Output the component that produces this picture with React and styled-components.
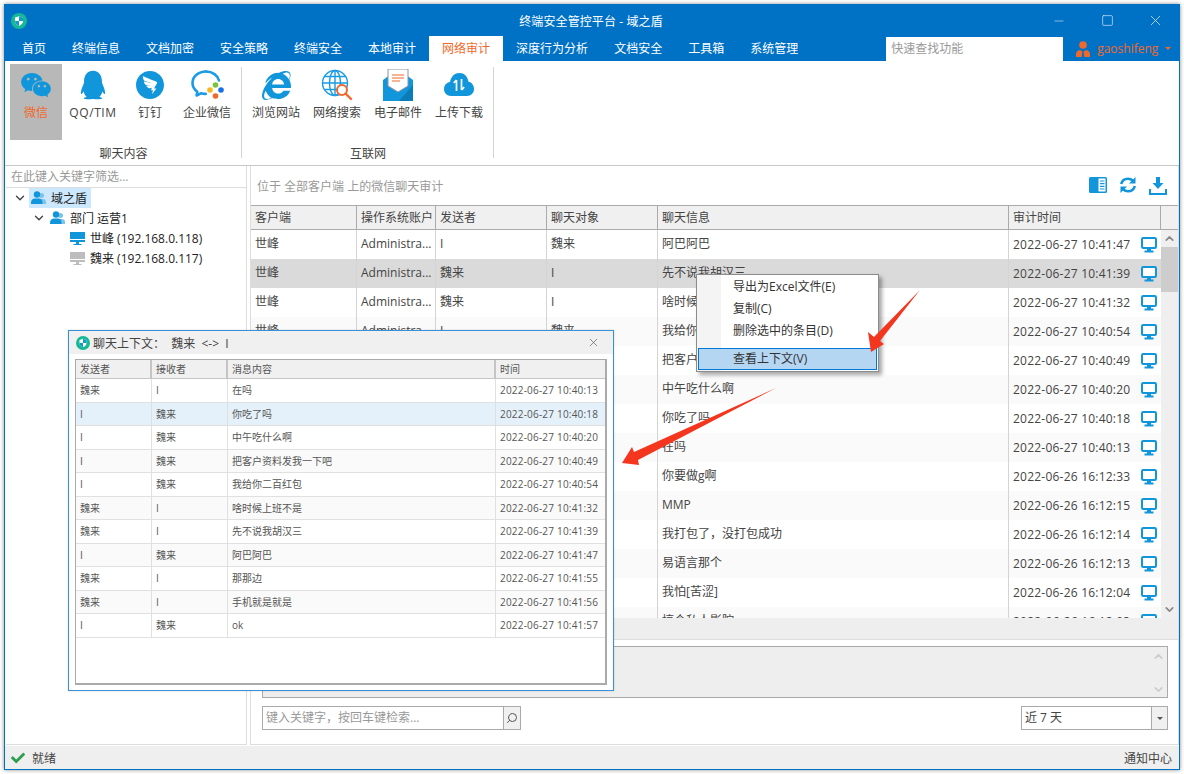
import React from 'react';
import styled, { createGlobalStyle } from 'styled-components';
import { AiFillWechat, AiFillDingtalkCircle } from 'react-icons/ai';
import { RiQqFill } from 'react-icons/ri';
import { FaInternetExplorer, FaCheck } from 'react-icons/fa';
import { FiSearch, FiX, FiMinus, FiSquare, FiChevronDown, FiChevronUp } from 'react-icons/fi';

const BLUE = '#0072c6';
const ICON = '#1296db';
const ORANGE = '#f2682a';

const Global = createGlobalStyle`
    html, body { margin: 0; padding: 0; background: #fff; }
    body {
        width: 1184px;
        height: 774px;
        overflow: hidden;
        font-family: "Open Sans", "Noto Sans CJK SC", sans-serif;
        font-size: 12px;
        color: #444;
    }
    * { box-sizing: border-box; }
`;

const Window = styled.div`
    position: relative;
    margin: 4px 0 0 4px;
    width: 1176px;
    height: 766px;
    display: flex;
    flex-direction: column;
    background: #fff;
    border: 1px solid ${BLUE};
    box-shadow: 0 0 4px rgba(0, 0, 0, 0.45);
`;

const TitleBar = styled.div`
    height: 31px;
    flex: none;
    background: ${BLUE};
    color: #fff;
    display: flex;
    align-items: center;
`;

const AppLogo = styled.div`
    width: 16px;
    height: 16px;
    margin-left: 6px;
    flex: none;
    display: flex;
`;

const TitleText = styled.div`
    flex: 1;
    text-align: center;
    font-size: 12px;
    margin-left: -22px;
    margin-right: -142px;
    letter-spacing: 0.1px;
`;

const WinButtons = styled.div`
    display: flex;
    color: #e6eef6;
`;

const WinButton = styled.div`
    width: 48px;
    height: 31px;
    display: flex;
    align-items: center;
    justify-content: center;
`;

const TabBar = styled.div`
    height: 25px;
    flex: none;
    background: ${BLUE};
    display: flex;
    padding-left: 4px;
`;

const Tab = styled.div`
    flex: none;
    padding: 0 13px;
    height: 25px;
    line-height: 25px;
    white-space: nowrap;
    color: ${p => (p.$active ? ORANGE : '#fff')};
    background: ${p => (p.$active ? '#fff' : 'transparent')};
`;

const QuickSearch = styled.div`
    flex: none;
    margin-left: 75px;
    width: 177px;
    height: 24px;
    margin-top: 1px;
    background: #fff;
    color: #999;
    padding-left: 5px;
    line-height: 24px;
`;

const UserBox = styled.div`
    flex: none;
    margin-left: 13px;
    display: flex;
    align-items: center;
    gap: 7px;
    color: ${ORANGE};
    height: 25px;
`;

const Caret = styled.span`
    width: 0;
    height: 0;
    border-left: 3px solid transparent;
    border-right: 3px solid transparent;
    border-top: 3px solid ${p => p.$color || ORANGE};
`;

const Ribbon = styled.div`
    height: 104px;
    flex: none;
    display: flex;
    background: #fff;
`;

const RibbonGroup = styled.div`
    position: relative;
    width: ${p => p.$width}px;
    padding: 3px 0 0 ${p => p.$pad}px;
    height: 99px;
    display: flex;
    gap: 5px;
    flex-wrap: wrap;
    align-content: flex-start;
    &::after {
        content: '';
        position: absolute;
        right: 0;
        top: 6px;
        bottom: 2px;
        width: 1px;
        background: #d4d4d4;
    }
`;

const RibbonButton = styled.div`
    width: ${p => p.$width}px;
    height: 76px;
    flex: none;
    display: flex;
    flex-direction: column;
    align-items: center;
    background: ${p => (p.$active ? '#b8b8b8' : 'transparent')};
    color: ${p => (p.$active ? ORANGE : '#444')};
    white-space: nowrap;
`;

const RibbonIcon = styled.div`
    height: 38px;
    padding-top: 4px;
    display: flex;
    align-items: center;
    justify-content: center;
    color: ${ICON};
`;

const RibbonLabel = styled.div`
    line-height: 16px;
    margin-top: 3px;
`;

const LatinLabel = styled(RibbonLabel)`
    letter-spacing: 0.6px;
`;

const GroupLabel = styled.div`
    width: calc(100% + ${p => p.$pad}px);
    margin-left: ${p => -p.$pad}px;
    text-align: center;
    line-height: 16px;
    margin-top: 1px;
`;

const Body = styled.div`
    flex: 1;
    min-height: 0;
    display: flex;
    border-top: 1px solid #c8c8c8;
    padding-left: 1px;
    padding-bottom: 1px;
`;

const LeftPane = styled.div`
    width: 241px;
    flex: none;
    border-right: 1px solid #ddd;
    border-bottom: 1px solid #ddd;
`;

const FilterBox = styled.div`
    height: 22px;
    line-height: 21px;
    padding-left: 5px;
    color: #999;
    border-bottom: 1px solid #ddd;
`;

const Tree = styled.div`
    display: flex;
    flex-direction: column;
`;

const TreeRow = styled.div`
    height: 20px;
    display: flex;
    align-items: center;
    padding-left: ${p => p.$indent}px;
    color: #222;
    white-space: nowrap;
`;

const TreeArrow = styled.span`
    width: 16px;
    display: flex;
    color: #444;
`;

const TreeLabel = styled.div`
    display: flex;
    align-items: center;
    height: 20px;
    gap: 5px;
    padding: 0 4px 0 2px;
    background: ${p => (p.$selected ? '#cce8ff' : 'transparent')};
`;

const RightPane = styled.div`
    width: 929px;
    margin-left: 3px;
    flex: none;
    display: flex;
    flex-direction: column;
    border-left: 1px solid #ddd;
    border-right: 1px solid #ddd;
    border-bottom: 1px solid #ddd;
`;

const Toolbar = styled.div`
    height: 39px;
    flex: none;
    display: flex;
    align-items: center;
    justify-content: space-between;
    padding: 0 11px 0 6px;
    color: #999;
`;

const ToolIcons = styled.div`
    display: flex;
    gap: 12px;
    color: ${ICON};
`;

const TableWrap = styled.div`
    height: 413px;
    flex: none;
    overflow: hidden;
    border-top: 1px solid #aaa;
`;

const HeadRow = styled.div`
    display: grid;
    grid-template-columns: 106px 79px 111px 111px 351px 152px 1fr;
    height: 24px;
    background: #f0f0f0;
    border-bottom: 1px solid #aaa;
`;

const HeadCell = styled.div`
    padding-left: 4px;
    line-height: 23px;
    border-right: 1px solid #aaa;
    color: #444;
    &:last-child { border-right: 0; }
`;

const TableBody = styled.div`
    display: flex;
`;

const Rows = styled.div`
    width: 910px;
    flex: none;
`;

const Row = styled.div`
    display: grid;
    grid-template-columns: 106px 79px 111px 111px 351px 152px;
    height: 29px;
    background: ${p => (p.$selected ? '#dadada' : p.$odd ? '#fafafa' : '#fff')};
`;

const Cell = styled.div`
    padding-left: 4px;
    line-height: 27px;
    white-space: nowrap;
    overflow: hidden;
    border-right: 1px solid #d4d4d4;
    color: #444;
    &:last-child {
        border-right: 0;
        display: flex;
        align-items: center;
        justify-content: space-between;
        padding-right: 4px;
        letter-spacing: 0.22px;
    }
`;

const ScrollBar = styled.div`
    width: 17px;
    height: 388px;
    flex: none;
    background: #efefef;
    display: flex;
    flex-direction: column;
    align-items: center;
    color: #888;
`;

const ScrollEnd = styled.div`
    height: 17px;
    flex: none;
    display: flex;
    align-items: center;
    justify-content: center;
`;

const ScrollThumb = styled.div`
    width: 100%;
    height: 45px;
    background: #cdcdcd;
`;

const ScrollSpace = styled.div`
    flex: 1;
`;

const GrayBar = styled.div`
    height: 22px;
    flex: none;
    background: #eee;
    border-bottom: 1px solid #ddd;
`;

const DetailArea = styled.div`
    flex: 1;
    padding: 6px 10px 0 11px;
    display: flex;
    flex-direction: column;
    gap: 8px;
`;

const DetailBox = styled.div`
    height: 52px;
    background: #eee;
    border: 1px solid #aaa;
    display: flex;
    justify-content: flex-end;
`;

const DetailScroll = styled.div`
    width: 17px;
    display: flex;
    flex-direction: column;
    justify-content: space-between;
    align-items: center;
    padding: 3px 0 1px;
    color: #ccc;
`;

const BottomRow = styled.div`
    display: flex;
    justify-content: space-between;
`;

const SearchBox = styled.div`
    width: 259px;
    height: 24px;
    display: flex;
    border: 1px solid #aaa;
    color: #999;
    line-height: 21px;
    padding-left: 3px;
`;

const SearchText = styled.div`
    flex: 1;
`;

const SearchBtn = styled.div`
    width: 17px;
    background: #f0f0f0;
    border-left: 1px solid #aaa;
    display: flex;
    align-items: center;
    justify-content: center;
    color: #555;
`;

const SelectBox = styled.div`
    width: 147px;
    height: 24px;
    border: 1px solid #aaa;
    display: flex;
    line-height: 21px;
    padding-left: 3px;
    color: #444;
`;

const SelectBtn = styled.div`
    width: 16px;
    background: #f0f0f0;
    border-left: 1px solid #aaa;
    display: flex;
    align-items: center;
    justify-content: center;
`;

const StatusBar = styled.div`
    height: 23px;
    flex: none;
    background: #efefef;
    display: flex;
    align-items: center;
    justify-content: space-between;
    padding: 0 7px 0 6px;
    color: #444;
`;

const StatusLeft = styled.div`
    display: flex;
    align-items: center;
    gap: 7px;
`;

const Dialog = styled.div`
    position: absolute;
    left: 63px;
    top: 325px;
    width: 546px;
    height: 361px;
    background: #fff;
    border: 1px solid #3a90d8;
    display: flex;
    flex-direction: column;
    box-shadow: 0 0 2px rgba(0, 0, 0, 0.15);
`;

const DialogTitle = styled.div`
    height: 23px;
    flex: none;
    background: #f0f0f0;
    display: flex;
    align-items: center;
    padding: 0 13px 0 7px;
    gap: 3px;
    color: #444;
`;

const DialogName = styled.div`
    flex: 1;
    white-space: pre;
`;

const DialogTable = styled.div`
    margin: 5px 6px 5px 6px;
    flex: 1;
    border: 1px solid #aaa;
    border-right-width: 2px;
    border-bottom-width: 2px;
    font-size: 10px;
    color: #555;
`;

const DialogHead = styled.div`
    display: grid;
    grid-template-columns: 76px 76px 268px 1fr;
    height: 19px;
    background: #f0f0f0;
    border-bottom: 1px solid #c4c4c4;
`;

const DialogHeadCell = styled.div`
    line-height: 18px;
    padding-left: 4px;
    border-right: 2px solid #c4c4c4;
    &:last-child { border-right: 0; }
`;

const DialogRow = styled.div`
    display: grid;
    grid-template-columns: 76px 76px 268px 1fr;
    height: 23.5px;
    background: ${p => (p.$selected ? '#e5f1fa' : p.$odd ? '#fafafa' : '#fff')};
    border-bottom: 1px solid #e0e0e0;
`;

const DialogCell = styled.div`
    line-height: 22px;
    padding-left: 4px;
    white-space: nowrap;
    border-right: 1px solid #e0e0e0;
    &:last-child { border-right: 0; letter-spacing: 0.2px; }
`;

const Menu = styled.div`
    position: absolute;
    left: 691px;
    top: 269px;
    width: 183px;
    height: 98px;
    background: #fff;
    border: 1px solid #8c8c8c;
    padding: 1px;
    box-shadow: 3px 3px 4px rgba(0, 0, 0, 0.35);
    background-image: linear-gradient(90deg, #f4f4f4 0, #f4f4f4 24px, #fff 24px);
    display: flex;
    flex-direction: column;
`;

const MenuItem = styled.div`
    height: 22px;
    line-height: 22px;
    padding-left: 35px;
    color: #333;
`;

const MenuItemActive = styled(MenuItem)`
    height: 23px;
    line-height: 20px;
    padding-left: 34px;
    margin-top: 2px;
    background: #b5d6f2;
    border: 1px solid #0078d7;
`;

const MenuSep = styled.div`
    height: 1px;
    margin: 4px 4px 0 30px;
    background: #ccc;
`;

const Arrows = styled.svg`
    position: absolute;
    left: -5px;
    top: -5px;
    width: 1184px;
    height: 774px;
    pointer-events: none;
`;

const Logo = ({ size = 16 }) => (
    <svg width={size} height={size} viewBox="0 0 16 16">
        <circle cx="8" cy="8" r="8" fill="#17b897" />
        <path d="M8 3.2 12 4.6V8c0 2.4-1.700 4-4 4.900C5.700 12 4 10.400 4 8V4.600z" fill="#fff" />
        <path d="M8 3.200 12 4.600V8H8zM8 8v4.900C5.700 12 4 10.400 4 8z" fill="#0f9fc4" />
    </svg>
);

const WorkWechat = () => (
    <svg width="34" height="32" viewBox="0 0 34 32">
        <path d="M16 2.500C8.500 2.500 2.500 7.500 2.500 14c0 3.600 1.900 6.700 4.800 8.800l-.7 3.700 4.300-2.200c1.500.4 3.100.6 4.800.6"
            fill="none" stroke="#1a9be6" strokeWidth="2.600" strokeLinecap="round" strokeLinejoin="round" />
        <path d="M16 2.500c6.500 0 11.800 3.900 13 9" fill="none" stroke="#1a9be6" strokeWidth="2.600" strokeLinecap="round" />
        <circle cx="25.500" cy="16" r="2.800" fill="#7cc242" />
        <circle cx="20" cy="21" r="2.800" fill="#f5b81f" />
        <circle cx="25.500" cy="27" r="2.800" fill="#f2682a" />
        <circle cx="31" cy="21" r="2.800" fill="#1a6fe6" />
    </svg>
);

const Globe = () => (
    <svg width="32" height="32" viewBox="0 0 32 32">
        <g fill="none" stroke="#1a9be6" strokeWidth="1.400">
            <circle cx="14" cy="14" r="12.500" />
            <ellipse cx="14" cy="14" rx="5.500" ry="12.500" />
            <path d="M14 1.500v25M1.500 14h25M3.500 7.500h21M3.500 20.500h21" />
        </g>
        <circle cx="21" cy="21" r="5" fill="#fff" stroke={ORANGE} strokeWidth="2" />
        <path d="M24.500 24.500 30 30" stroke={ORANGE} strokeWidth="2.400" strokeLinecap="round" />
    </svg>
);

const Mail = () => (
    <svg width="30" height="32" viewBox="0 0 30 32">
        <path d="M0 11 15 0l15 11v21H0z" fill="#1296db" />
        <path d="M5 0h20v17l-10 6-10-6z" fill="#fff" stroke="#8a95a5" strokeWidth="1" />
        <path d="M9 6h12M9 9h12M9 12h8" stroke={ORANGE} strokeWidth="1.200" />
        <path d="M30 32H16L30 16z" fill="#0c7cb8" />
    </svg>
);

const Cloud = () => (
    <svg width="30" height="26" viewBox="0 0 30 26">
        <path d="M7 24C3 24 0 21 0 17c0-3.600 2.600-6.500 6-7C7 4.300 10.800 1 15.500 1 20 1 23.700 4.300 24.400 9.500 27.700 10.300 30 13.300 30 17c0 4-3 7-7 7z" fill="#1296db" />
        <path d="M12.500 19V8M9.800 10.800l2.700-2.800M17.500 7v11M17.500 18l2.700-2.800" stroke="#fff" strokeWidth="1.700" fill="none" />
    </svg>
);

const Persons = () => (
    <svg width="15" height="14" viewBox="0 0 15 14">
        <circle cx="10.500" cy="4.500" r="2.500" fill="#7cc4ea" />
        <path d="M9 8h3c1.700 0 3 1.200 3 3v2H9z" fill="#7cc4ea" />
        <circle cx="6" cy="3.500" r="3.200" fill="#1296db" />
        <path d="M0 13v-1.500C0 9 2 7.500 4 7.500h4c2 0 3.500 1.500 3.500 4V13z" fill="#1296db" />
    </svg>
);

const TreeMonitor = ({ color }) => (
    <svg width="15" height="13" viewBox="0 0 15 13">
        <path d="M0 0h15v10H0z" fill={color} />
        <path d="M0 7.500h15" stroke="#fff" strokeWidth="1" />
        <path d="M6 10h3v2h2.500v1h-8v-1H6z" fill={color} />
    </svg>
);

const RowMonitor = () => (
    <svg width="16" height="16" viewBox="0 0 16 16">
        <rect x="1" y="1" width="14" height="10" rx="1.200" fill="#fff" stroke={ICON} strokeWidth="2" />
        <path d="M6 12h4v1.500h2.500V15.500h-9V13.500H6z" fill={ICON} />
    </svg>
);

const PanelIcon = () => (
    <svg width="18" height="16" viewBox="0 0 18 16">
        <rect width="18" height="16" rx="1.500" fill={ICON} />
        <rect x="9.500" y="1.500" width="7" height="13" fill="#fff" />
        <path d="M11 4h4.500M11 6.700h4.500M11 9.400h4.500M11 12h4.500" stroke={ICON} strokeWidth="1.200" />
    </svg>
);

const RefreshIcon = () => (
    <svg width="18" height="16" viewBox="0 0 18 16">
        <path d="M2.200 7C3 3.800 5.700 1.700 9 1.700c2 0 3.700.8 5 2" fill="none" stroke={ICON} strokeWidth="2.600" />
        <path d="M16.500 0v6.500H10z" fill={ICON} />
        <path d="M15.800 9C15 12.200 12.300 14.300 9 14.300c-2 0-3.700-.8-5-2" fill="none" stroke={ICON} strokeWidth="2.600" />
        <path d="M1.500 16V9.500H8z" fill={ICON} />
    </svg>
);

const DownloadIcon = () => (
    <svg width="18" height="18" viewBox="0 0 18 18">
        <path d="M7 0h4v6h3.500L9 12 3.500 6H7z" fill={ICON} />
        <path d="M1 12v5h16v-5" fill="none" stroke={ICON} strokeWidth="2" />
    </svg>
);

const UserIcon = () => (
    <svg width="14" height="16" viewBox="0 0 14 16">
        <circle cx="7" cy="4" r="3.800" fill={ORANGE} />
        <path d="M0 16v-3c0-2 1.500-3.500 4-4l3 2 3-2c2.500.5 4 2 4 4v3z" fill={ORANGE} />
        <path d="M6.300 11h1.400l.5 5H5.800z" fill="#0072c6" />
    </svg>
);

const tabs = ['首页', '终端信息', '文档加密', '安全策略', '终端安全', '本地审计', '网络审计', '深度行为分析', '文档安全', '工具箱', '系统管理'];

const WEI = '魏来';
const ADMIN = 'Administra...';

const rows = [
    ['I', WEI, '阿巴阿巴', '2022-06-27 10:41:47'],
    [WEI, 'I', '先不说我胡汉三', '2022-06-27 10:41:39'],
    [WEI, 'I', '啥时候上班不是', '2022-06-27 10:41:32'],
    ['I', WEI, '我给你二百红包', '2022-06-27 10:40:54'],
    ['I', WEI, '把客户资料发我一下吧', '2022-06-27 10:40:49'],
    ['I', WEI, '中午吃什么啊', '2022-06-27 10:40:20'],
    ['I', WEI, '你吃了吗', '2022-06-27 10:40:18'],
    [WEI, 'I', '在吗', '2022-06-27 10:40:13'],
    [WEI, 'I', '你要做g啊', '2022-06-26 16:12:33'],
    ['I', WEI, 'MMP', '2022-06-26 16:12:15'],
    [WEI, 'I', '我打包了，没打包成功', '2022-06-26 16:12:14'],
    ['I', WEI, '易语言那个', '2022-06-26 16:12:13'],
    [WEI, 'I', '我怕[苦涩]', '2022-06-26 16:12:04'],
    ['I', WEI, '搞个私人影院', '2022-06-26 16:12:03'],
];

const contextRows = [
    [WEI, 'I', '在吗', '2022-06-27 10:40:13'],
    ['I', WEI, '你吃了吗', '2022-06-27 10:40:18'],
    ['I', WEI, '中午吃什么啊', '2022-06-27 10:40:20'],
    ['I', WEI, '把客户资料发我一下吧', '2022-06-27 10:40:49'],
    ['I', WEI, '我给你二百红包', '2022-06-27 10:40:54'],
    [WEI, 'I', '啥时候上班不是', '2022-06-27 10:41:32'],
    [WEI, 'I', '先不说我胡汉三', '2022-06-27 10:41:39'],
    ['I', WEI, '阿巴阿巴', '2022-06-27 10:41:47'],
    [WEI, 'I', '那那边', '2022-06-27 10:41:55'],
    [WEI, 'I', '手机就是就是', '2022-06-27 10:41:56'],
    ['I', WEI, 'ok', '2022-06-27 10:41:57'],
];

export default () => (
    <Window>
        <Global />
        <TitleBar>
            <AppLogo><Logo /></AppLogo>
            <TitleText>终端安全管控平台 - 域之盾</TitleText>
            <WinButtons>
                <WinButton><FiMinus size={14} strokeWidth={1} /></WinButton>
                <WinButton><FiSquare size={13} strokeWidth={1.2} /></WinButton>
                <WinButton><FiX size={17} strokeWidth={1} /></WinButton>
            </WinButtons>
        </TitleBar>
        <TabBar>
            {tabs.map(t => <Tab key={t} $active={t === '网络审计'}>{t}</Tab>)}
            <QuickSearch>快速查找功能</QuickSearch>
            <UserBox><UserIcon />gaoshifeng<Caret /></UserBox>
        </TabBar>
        <Ribbon>
            <RibbonGroup $width={237} $pad={5}>
                <RibbonButton $width={52} $active>
                    <RibbonIcon><AiFillWechat size={34} /></RibbonIcon>
                    <RibbonLabel>微信</RibbonLabel>
                </RibbonButton>
                <RibbonButton $width={52}>
                    <RibbonIcon><RiQqFill size={34} /></RibbonIcon>
                    <LatinLabel>QQ/TIM</LatinLabel>
                </RibbonButton>
                <RibbonButton $width={52}>
                    <RibbonIcon><AiFillDingtalkCircle size={32} /></RibbonIcon>
                    <RibbonLabel>钉钉</RibbonLabel>
                </RibbonButton>
                <RibbonButton $width={52}>
                    <RibbonIcon><WorkWechat /></RibbonIcon>
                    <RibbonLabel>企业微信</RibbonLabel>
                </RibbonButton>
                <GroupLabel $pad={5}>聊天内容</GroupLabel>
            </RibbonGroup>
            <RibbonGroup $width={252} $pad={6}>
                <RibbonButton $width={56}>
                    <RibbonIcon><FaInternetExplorer size={29} /></RibbonIcon>
                    <RibbonLabel>浏览网站</RibbonLabel>
                </RibbonButton>
                <RibbonButton $width={56}>
                    <RibbonIcon><Globe /></RibbonIcon>
                    <RibbonLabel>网络搜索</RibbonLabel>
                </RibbonButton>
                <RibbonButton $width={56}>
                    <RibbonIcon><Mail /></RibbonIcon>
                    <RibbonLabel>电子邮件</RibbonLabel>
                </RibbonButton>
                <RibbonButton $width={56}>
                    <RibbonIcon><Cloud /></RibbonIcon>
                    <RibbonLabel>上传下载</RibbonLabel>
                </RibbonButton>
                <GroupLabel $pad={6}>互联网</GroupLabel>
            </RibbonGroup>
        </Ribbon>
        <Body>
            <LeftPane>
                <FilterBox>在此键入关键字筛选...</FilterBox>
                <Tree>
                    <TreeRow $indent={7}>
                        <TreeArrow><FiChevronDown size={14} strokeWidth={2.4} /></TreeArrow>
                        <TreeLabel $selected><Persons />域之盾</TreeLabel>
                    </TreeRow>
                    <TreeRow $indent={26}>
                        <TreeArrow><FiChevronDown size={14} strokeWidth={2.4} /></TreeArrow>
                        <TreeLabel><Persons />部门 运营1</TreeLabel>
                    </TreeRow>
                    <TreeRow $indent={62}>
                        <TreeLabel><TreeMonitor color={ICON} />世峰 (192.168.0.118)</TreeLabel>
                    </TreeRow>
                    <TreeRow $indent={62}>
                        <TreeLabel><TreeMonitor color="#bdbdbd" />魏来 (192.168.0.117)</TreeLabel>
                    </TreeRow>
                </Tree>
            </LeftPane>
            <RightPane>
                <Toolbar>
                    位于 全部客户端 上的微信聊天审计
                    <ToolIcons>
                        <PanelIcon />
                        <RefreshIcon />
                        <DownloadIcon />
                    </ToolIcons>
                </Toolbar>
                <TableWrap>
                    <HeadRow>
                        {['客户端', '操作系统账户', '发送者', '聊天对象', '聊天信息', '审计时间', ''].map(h => (
                            <HeadCell key={h}>{h}</HeadCell>
                        ))}
                    </HeadRow>
                    <TableBody>
                        <Rows>
                            {rows.map((r, i) => (
                                <Row key={r[3]} $selected={i === 1} $odd={i % 2 === 1}>
                                    <Cell>世峰</Cell>
                                    <Cell>{ADMIN}</Cell>
                                    <Cell>{r[0]}</Cell>
                                    <Cell>{r[1]}</Cell>
                                    <Cell>{r[2]}</Cell>
                                    <Cell>{r[3]}<RowMonitor /></Cell>
                                </Row>
                            ))}
                        </Rows>
                        <ScrollBar>
                            <ScrollEnd><FiChevronUp size={13} strokeWidth={3} /></ScrollEnd>
                            <ScrollThumb />
                            <ScrollSpace />
                            <ScrollEnd><FiChevronDown size={13} strokeWidth={3} /></ScrollEnd>
                        </ScrollBar>
                    </TableBody>
                </TableWrap>
                <GrayBar />
                <DetailArea>
                    <DetailBox>
                        <DetailScroll>
                            <FiChevronUp size={13} strokeWidth={3} />
                            <FiChevronDown size={13} strokeWidth={3} />
                        </DetailScroll>
                    </DetailBox>
                    <BottomRow>
                        <SearchBox>
                            <SearchText>键入关键字，按回车键检索...</SearchText>
                            <SearchBtn><FiSearch size={12} style={{ transform: 'scaleX(-1)' }} /></SearchBtn>
                        </SearchBox>
                        <SelectBox>
                            <SearchText>近 7 天</SearchText>
                            <SelectBtn><Caret $color="#555" /></SelectBtn>
                        </SelectBox>
                    </BottomRow>
                </DetailArea>
            </RightPane>
        </Body>
        <StatusBar>
            <StatusLeft><FaCheck size={14} color="#2e9e4f" />就绪</StatusLeft>
            通知中心
        </StatusBar>

        <Dialog>
            <DialogTitle>
                <Logo size={14} />
                <DialogName>聊天上下文：  魏来  {'<->'}  I</DialogName>
                <FiX size={13} strokeWidth={1.2} color="#555" />
            </DialogTitle>
            <DialogTable>
                <DialogHead>
                    {['发送者', '接收者', '消息内容', '时间'].map(h => <DialogHeadCell key={h}>{h}</DialogHeadCell>)}
                </DialogHead>
                {contextRows.map((r, i) => (
                    <DialogRow key={r[3]} $selected={i === 1} $odd={i % 2 === 1}>
                        {r.map((c, j) => <DialogCell key={j}>{c}</DialogCell>)}
                    </DialogRow>
                ))}
            </DialogTable>
        </Dialog>

        <Menu>
            <MenuItem>导出为Excel文件(E)</MenuItem>
            <MenuItem>复制(C)</MenuItem>
            <MenuItem>删除选中的条目(D)</MenuItem>
            <MenuSep />
            <MenuItemActive>查看上下文(V)</MenuItemActive>
        </Menu>

        <Arrows viewBox="0 0 1184 774">
            <polygon points="920,290 880,341 884,344 871,352 868,332 874,337" fill="#f5361f" />
            <polygon points="776,388 634,452 632,447 622,463 639,465 638,460" fill="#f5361f" />
        </Arrows>
    </Window>
);
